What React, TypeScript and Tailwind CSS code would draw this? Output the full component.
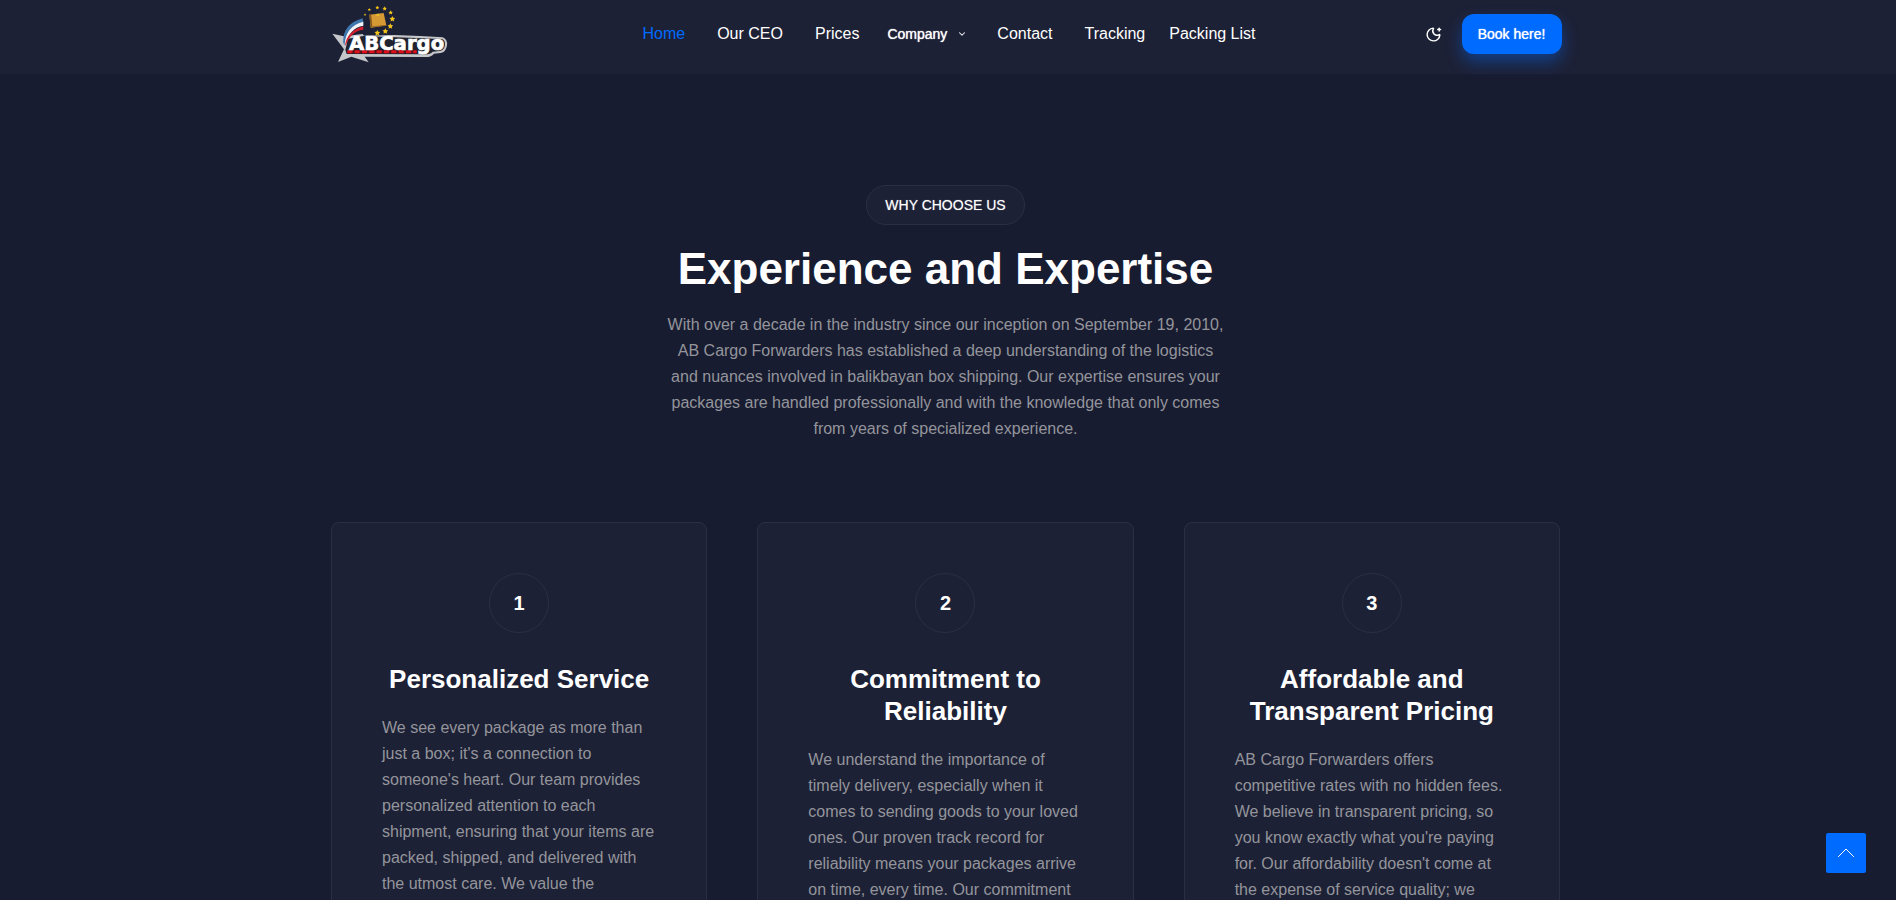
import { ChevronDown, MoonStar } from "lucide-react";

const features = [
  {
    title: "Personalized Service",
    text: "We see every package as more than just a box; it's a connection to someone's heart. Our team provides personalized attention to each shipment, ensuring that your items are packed, shipped, and delivered with the utmost care. We value the",
  },
  {
    title: "Commitment to Reliability",
    text: "We understand the importance of timely delivery, especially when it comes to sending goods to your loved ones. Our proven track record for reliability means your packages arrive on time, every time. Our commitment",
  },
  {
    title: "Affordable and Transparent Pricing",
    text: "AB Cargo Forwarders offers competitive rates with no hidden fees. We believe in transparent pricing, so you know exactly what you're paying for. Our affordability doesn't come at the expense of service quality; we",
  },
];

const stars = [
  [148, 29, 5], [172, 23, 6], [194, 26, 7], [212, 38, 7], [217, 57, 9],
  [211, 79, 9], [196, 94, 9], [172, 99, 9], [135, 44, 4],
];

function starPoints(cx: number, cy: number, r: number) {
  return Array.from({ length: 10 }, (_, i) => {
    const radius = i % 2 ? r * 0.5 : r;
    const angle = (Math.PI / 5) * i - Math.PI / 2;
    return `${cx + radius * Math.cos(angle)},${cy + radius * Math.sin(angle)}`;
  }).join(" ");
}

function Logo() {
  return (
    <svg viewBox="30 9 360 186" className="h-[62px] w-[120px]" role="img" aria-label="ABCargo">
      <path
        d="M37 101 L72 109 L128 102 L132 107 L222 105 L300 108 L368 112 Q383 118 381 136 Q378 157 362 159 L342 161 Q334 171 318 171 L134 170 L146 187 L94 170 L54 186 L72 148 Z"
        fill="#c4c6ca"
      />
      <path
        d="M84 116 L130 108 L366 117 Q377 122 375 136 Q372 152 358 153 L338 155 Q331 163 316 163 L80 162 L76 150 Z"
        fill="#20232f"
      />
      <path d="M70 130 Q66 72 128 55 L130 67 Q82 78 75 135 Z" fill="#3f76ad" />
      <path d="M74 132 Q78 78 130 65 L130 77 Q88 84 76 136 Z" fill="#f2f4f8" />
      <path d="M75 136 Q82 92 130 79 L130 89 Q92 94 77 136 Z" fill="#cf1f2c" />
      <path d="M148 44 L191 39 L199 76 L152 83 Z" fill="#d69a35" />
      <path d="M148 44 L153 41 L157 79 L152 83 Z" fill="#85571d" />
      <path d="M152 83 L157 79 L199 74 L199 77 Z" fill="#9c6a24" />
      <path d="M168 42 L178 41 L178 48 L171 49 Z" fill="#eab92e" />
      {stars.map(([x, y, r]) => (
        <polygon key={`${x}-${y}`} points={starPoints(x, y, r)} fill="#f2c518" />
      ))}
      <path d="M82 155 H290" stroke="#5c1018" strokeWidth="9" />
      <path d="M82 155 H290" stroke="#dc0f1b" strokeWidth="9" strokeDasharray="15 7" />
      <text
        x="87"
        y="149"
        fontSize="59"
        fontWeight="700"
        fill="#ffffff"
        stroke="#ffffff"
        strokeWidth="2"
        fontFamily="'DejaVu Sans', sans-serif"
      >
        ABCargo
      </text>
    </svg>
  );
}

export default function App() {
  return (
    <div className="h-screen overflow-hidden bg-[#181c31] font-['Liberation_Sans',Arial,sans-serif] text-base text-white">
      <header className="h-[74px] bg-[#1d2136] pr-[5px]">
        <div className="mx-auto flex h-[68px] max-w-[1232px] items-center justify-between">
          <a href="#" className="block w-[313px]">
            <Logo />
          </a>
          <nav>
            <ul className="flex items-center gap-8 whitespace-nowrap">
              <li><a href="#" className="text-[#006bff]">Home</a></li>
              <li><a href="#">Our CEO</a></li>
              <li><a href="#">Prices</a></li>
              <li className="-mr-0.5 -ml-1">
                <button type="button" className="flex items-center gap-2.5 text-sm font-medium text-shadow-[0_0_1px_#ffffff]">
                  Company
                  <ChevronDown className="size-2.5" strokeWidth={2.5} />
                </button>
              </li>
              <li><a href="#">Contact</a></li>
              <li><a href="#">Tracking</a></li>
              <li className="-ml-2"><a href="#">Packing List</a></li>
            </ul>
          </nav>
          <div className="flex w-[306px] items-center justify-end gap-5">
            <button type="button" aria-label="Toggle theme">
              <MoonStar className="size-[17px]" strokeWidth={2} />
            </button>
            <a
              href="#"
              className="flex h-10 w-[100px] items-center justify-center rounded-xl bg-[#006bff] text-sm font-medium shadow-[0_8px_16px_rgba(0,107,255,0.4)] text-shadow-[0_0_1px_#ffffff]"
            >
              Book here!
            </a>
          </div>
        </div>
      </header>

      <main className="pt-[111px] pr-[5px]">
        <div className="mx-auto max-w-[1229px]">
          <section className="mx-auto flex max-w-[564px] flex-col items-center text-center">
            <span className="flex h-10 items-center rounded-full border border-[#2d2f40] bg-[#1d2136] px-[18px] text-sm font-medium text-shadow-[0_0_1px_#ffffff80]">
              WHY CHOOSE US
            </span>
            <h1 className="mt-4 text-[44px] leading-[56px] font-bold">Experience and Expertise</h1>
            <p className="mt-[15px] leading-[26px] text-[#94959b]">
              With over a decade in the industry since our inception on September 19, 2010, AB Cargo
              Forwarders has established a deep understanding of the logistics and nuances involved in
              balikbayan box shipping. Our expertise ensures your packages are handled professionally
              and with the knowledge that only comes from years of specialized experience.
            </p>
          </section>

          <section className="mt-20 grid grid-cols-3 gap-[50px]">
            {features.map((feature, index) => (
              <article
                key={feature.title}
                className="flex flex-col items-center rounded-lg border border-[#2d2f40] bg-[#1d2136] p-[50px]"
              >
                <div className="flex size-[60px] items-center justify-center rounded-full border border-[#2d2f40] text-xl font-bold">
                  {index + 1}
                </div>
                <h2 className="mt-[30px] text-center text-[26px] leading-8 font-bold">{feature.title}</h2>
                <p className="mt-5 w-full leading-[26px] text-[#94959b]">{feature.text}</p>
              </article>
            ))}
          </section>
        </div>
      </main>

      <button
        type="button"
        aria-label="Back to top"
        className="fixed right-[30px] bottom-[27px] flex size-10 items-center justify-center rounded-xs bg-[#006bff]"
      >
        <svg viewBox="0 0 18 10" className="h-[10px] w-[18px]" fill="none" stroke="currentColor">
          <path d="M1 9 L9 1 L17 9" />
        </svg>
      </button>
    </div>
  );
}
